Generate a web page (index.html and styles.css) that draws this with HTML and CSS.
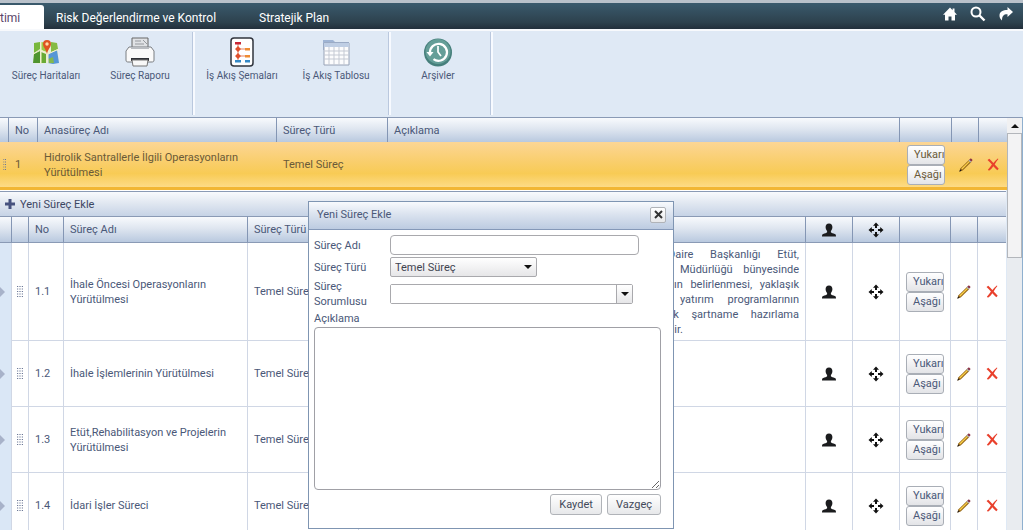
FILE: index.html
```html
<!DOCTYPE html>
<html lang="tr">
<head>
<meta charset="utf-8">
<title>Süreç Yönetimi</title>
<link rel="stylesheet" href="styles.css">
</head>
<body>
<svg class="defs" aria-hidden="true">
  <symbol id="i-person" viewBox="0 0 16 14"><path d="M8 0.5c2.300 0 3.400 1.500 3.400 3.600 0 1.700-.7 3.100-1.500 3.900v1.300c.6.9 2.300 1.100 3.900 1.700.9.400 1.200 1 1.200 2.500H1c0-1.500.3-2.100 1.200-2.500 1.600-.6 3.300-.8 3.900-1.700V8C5.300 7.200 4.600 5.800 4.600 4.100 4.600 2 5.700.5 8 .5z" fill="#1b1c1e"/></symbol>
  <symbol id="i-move" viewBox="0 0 16 16"><path d="M8 .5l3 3.300H9V6H7V3.800H5zM8 15.500l-3-3.300h2V10h2v2.200h2zM.5 8l3.300-3v2H6v2H3.800v2zM15.500 8l-3.300 3V9H10V7h2.200V5z" fill="#111"/></symbol>
  <symbol id="i-pencil" viewBox="0 0 14 14"><path d="M.5 13.500l1-3.200L10.200 1.800l2.200 2.200L3.700 12.500z" fill="#9a6a1c"/><path d="M2.300 10.500L10.300 2.700l.8.8L3.200 11.500z" fill="#ffd64a"/><path d="M9.800 2.200l1.600-1.600c.8-.5 2.400 1 2 1.900l-1.700 1.600z" fill="#8c3648"/><path d="M9.500 2.500l.8-.7 2 2-.8.800z" fill="#a6b4bc"/><path d="M.3 13.700l.8-2.400 1.500 1.500z" fill="#221b16"/></symbol>
  <symbol id="i-delete" viewBox="0 0 12 13"><path d="M.5 2.100L2.300.7C4 2.200 5.200 3.700 6.400 5 7.600 3.500 9 1.800 10.800.5l.6.600C9.800 3 8.600 4.800 7.700 6.400c1.300 1.400 2.600 2.800 4 4.300l-1.400 1.600C8.800 10.900 7.500 9.500 6.300 8.200 5.200 9.900 3.900 11.400 2 12.700L.9 11.700C2.500 10.100 3.900 8.200 4.900 6.600 3.600 5.100 2.200 3.600.5 2.100z" fill="#e9402c"/></symbol>
  <symbol id="i-grip" viewBox="0 0 6 12"><path d="M0 .5h6M0 3h6M0 5.500h6M0 8h6M0 10.500h6" stroke="#6c7897" stroke-width="1.200" stroke-dasharray="1.200 1.200"/></symbol>
</svg>

<header class="top">
  <nav class="tabs">
    <a class="tab active" href="#surec">timi</a>
    <a class="tab" href="#risk">Risk Değerlendirme ve Kontrol</a>
    <a class="tab" href="#plan">Stratejik Plan</a>
  </nav>
  <div class="tools">
    <button type="button" aria-label="Ana sayfa"><svg width="14" height="14" viewBox="0 0 14 14"><path d="M7 .5l2.600 2.700V1.500h1.900v3.600L14 7.700h-2V13.500H8.500V9.500h-3v4H2V7.700H0z" fill="#fff"/></svg></button>
    <button type="button" aria-label="Ara"><svg width="16" height="16" viewBox="0 0 16 16" fill="none" stroke="#fff"><circle cx="6" cy="6" r="4.500" stroke-width="2"/><path d="M9.500 9.500l5 5" stroke-width="2.400"/></svg></button>
    <button type="button" aria-label="Paylaş"><svg width="14" height="14" viewBox="0 0 14 14"><path d="M8.500 0L14 5 8.500 10V7.200C5 7 3 8.500 3 13.500 1.200 12 .3 10 .5 8c.4-3.200 3.300-5 8-5z" fill="#fff"/></svg></button>
  </div>
</header>

<section class="ribbon">
  <div class="group">
    <button type="button" class="action">
      <svg width="30" height="30" viewBox="0 0 30 30"><path d="M3 6l7-1 6 1 5-1 5 1 2 20-7 1-6-1-6 1-7-1z" fill="#e9eed4"/><path d="M3 6l6-1v7l-6 4z" fill="#78b83c"/><path d="M3 17l6-4v13l-7 0z" fill="#4f942e"/><path d="M10 5l6 1v9l-6-2z" fill="#9bcc48"/><path d="M10 15l5 2v9l-5 0z" fill="#69aa35"/><path d="M17 17l9-4 2 13-6 1-5-1z" fill="#5697d6"/><path d="M20 5l6 1 1 6-7 3z" fill="#86bb42"/><path d="M17 22l5-2 1 6-5 0z" fill="#84b84e"/><path d="M2 17l8-4 7 4 11-5M10 5v21M17 6v20" stroke="#f5f2cb" fill="none"/><path d="M16 17c-1-5-4-7-4-10a4 4 0 0 1 8 0c0 3-3 5-4 10z" fill="#df5420"/><circle cx="16" cy="7" r="1.700" fill="#ffd9a5"/></svg>
      <span>Süreç Haritaları</span>
    </button>
    <button type="button" class="action">
      <svg width="30" height="30" viewBox="0 0 30 30"><path d="M7 1h16v11H7z" fill="#e0e2e5" stroke="#666"/><path d="M10 4h6M10 7h9M18 3l4 4" stroke="#96999e"/><path d="M4 10h22l3 4v9c0 2-1 2-3 2H4c-2 0-3 0-3-2v-9z" fill="#fafafa" stroke="#7b7e82"/><path d="M6 10h18v2H6z" fill="#b9bcc1"/><path d="M6 21h18v3H6z" fill="#2e3136"/><path d="M7 23h16l-1 6H8z" fill="#f8f8f8" stroke="#777"/></svg>
      <span>Süreç Raporu</span>
    </button>
  </div>
  <div class="group">
    <button type="button" class="action">
      <svg width="30" height="30" viewBox="0 0 30 30"><rect x="4" y="1" width="22" height="28" rx="3" fill="#fff" stroke="#30343d" stroke-width="1.500"/><path d="M11 6v18M11 12h9M11 19h9" stroke="#e58460" fill="none"/><path d="M8 5h6v2.500H8z" fill="#c92736"/><path d="M11 9l3 3-3 3-3-3zM11 16l3 3-3 3-3-3z" fill="#e0502c"/><path d="M18 11h5v2.500h-5zM18 18h5v2.500h-5z" fill="#ef8c31"/><path d="M8 23h6v2.500H8zM18 23h5v2.500h-5z" fill="#3589c6"/></svg>
      <span>İş Akış Şemaları</span>
    </button>
    <button type="button" class="action">
      <svg width="30" height="30" viewBox="0 0 30 30"><path d="M2 3h10l2 2h14v8H2z" fill="#9fb4d4"/><path d="M3 6h25v22H3z" fill="#fcfcfd" stroke="#97a2b6"/><path d="M3 6h25v4H3z" fill="#bfcee4"/><path d="M3 14h25M3 18h25M3 22h25M8 10v18M13 10v18M18 10v18M23 10v18" stroke="#c4c9d3"/></svg>
      <span>İş Akış Tablosu</span>
    </button>
  </div>
  <div class="group">
    <button type="button" class="action">
      <svg width="30" height="30" viewBox="0 0 30 30"><circle cx="15" cy="15.500" r="14" fill="#467f7b"/><circle cx="15" cy="14.500" r="12.500" fill="#659e98"/><path d="M7 16a8.500 8.500 0 1 1 3.500 6.200" fill="none" stroke="#fff" stroke-width="2.200"/><path d="M3.500 15h7L7 19.500z" fill="#fff"/><path d="M15 9v6l3 4" fill="none" stroke="#fff" stroke-width="1.700"/></svg>
      <span>Arşivler</span>
    </button>
  </div>
</section>

<main class="workspace">
  <div class="content">
    <table class="grid outer">
      <colgroup><col class="c-edge"><col class="c-num"><col class="c-main"><col class="c-type"><col><col class="c-order"><col class="c-icon"><col class="c-last"></colgroup>
      <thead><tr><th></th><th>No</th><th>Anasüreç Adı</th><th>Süreç Türü</th><th>Açıklama</th><th></th><th></th><th></th></tr></thead>
      <tbody><tr class="selected">
        <td class="ic"><svg width="3" height="12" viewBox="3 0 3 12"><use href="#i-grip" width="6" height="12"/></svg></td><td>1</td><td>Hidrolik Santrallerle İlgili Operasyonların Yürütülmesi</td><td>Temel Süreç</td><td></td>
        <td><div class="order"><button type="button">Yukarı</button><button type="button">Aşağı</button></div></td>
        <td class="ic"><svg width="14" height="14"><use href="#i-pencil"/></svg></td><td class="ic"><svg width="12" height="13"><use href="#i-delete"/></svg></td>
      </tr></tbody>
    </table>
    <div class="nested">
      <div class="addbar"><button type="button"><svg width="10" height="10" viewBox="0 0 10 10"><path d="M3.500 0h3v3.500H10v3H6.500V10h-3V6.500H0v-3h3.500z" fill="#47527f"/></svg>Yeni Süreç Ekle</button></div>
      <table class="grid inner">
        <colgroup><col class="n-arrow"><col class="n-grip"><col class="n-num"><col class="n-name"><col class="c-type"><col><col class="n-user"><col class="n-user"><col class="n-order"><col class="c-icon"><col class="c-last"></colgroup>
        <thead><tr><th></th><th></th><th>No</th><th>Süreç Adı</th><th>Süreç Türü</th><th></th><th class="ic"><svg width="16" height="14"><use href="#i-person"/></svg></th><th class="ic"><svg width="16" height="16"><use href="#i-move"/></svg></th><th></th><th></th><th></th></tr></thead>
        <tbody>
          <tr class="tall"><td class="arrow"><i></i></td><td class="ic"><svg width="6" height="12"><use href="#i-grip"/></svg></td><td>1.1</td><td>İhale Öncesi Operasyonların Yürütülmesi</td><td>Temel Süreç</td>
            <td><p class="desc"><span>Daire Başkanlığı Etüt,</span><span class="in">Müdürlüğü bünyesinde</span><span>nın belirlenmesi, yaklaşık</span><span class="in">yatırım programlarının</span><span>lik şartname hazırlama</span><span class="end">dir.</span></p></td>
            <td class="ic"><svg width="16" height="14"><use href="#i-person"/></svg></td><td class="ic"><svg width="16" height="16"><use href="#i-move"/></svg></td><td><div class="order"><button type="button">Yukarı</button><button type="button">Aşağı</button></div></td><td class="ic"><svg width="14" height="14"><use href="#i-pencil"/></svg></td><td class="ic"><svg width="12" height="13"><use href="#i-delete"/></svg></td></tr>
          <tr><td class="arrow"><i></i></td><td class="ic"><svg width="6" height="12"><use href="#i-grip"/></svg></td><td>1.2</td><td>İhale İşlemlerinin Yürütülmesi</td><td>Temel Süreç</td><td></td>
            <td class="ic"><svg width="16" height="14"><use href="#i-person"/></svg></td><td class="ic"><svg width="16" height="16"><use href="#i-move"/></svg></td><td><div class="order"><button type="button">Yukarı</button><button type="button">Aşağı</button></div></td><td class="ic"><svg width="14" height="14"><use href="#i-pencil"/></svg></td><td class="ic"><svg width="12" height="13"><use href="#i-delete"/></svg></td></tr>
          <tr><td class="arrow"><i></i></td><td class="ic"><svg width="6" height="12"><use href="#i-grip"/></svg></td><td>1.3</td><td>Etüt,Rehabilitasyon ve Projelerin Yürütülmesi</td><td>Temel Süreç</td><td></td>
            <td class="ic"><svg width="16" height="14"><use href="#i-person"/></svg></td><td class="ic"><svg width="16" height="16"><use href="#i-move"/></svg></td><td><div class="order"><button type="button">Yukarı</button><button type="button">Aşağı</button></div></td><td class="ic"><svg width="14" height="14"><use href="#i-pencil"/></svg></td><td class="ic"><svg width="12" height="13"><use href="#i-delete"/></svg></td></tr>
          <tr><td class="arrow"><i></i></td><td class="ic"><svg width="6" height="12"><use href="#i-grip"/></svg></td><td>1.4</td><td>İdari İşler Süreci</td><td>Temel Süreç</td><td></td>
            <td class="ic"><svg width="16" height="14"><use href="#i-person"/></svg></td><td class="ic"><svg width="16" height="16"><use href="#i-move"/></svg></td><td><div class="order"><button type="button">Yukarı</button><button type="button">Aşağı</button></div></td><td class="ic"><svg width="14" height="14"><use href="#i-pencil"/></svg></td><td class="ic"><svg width="12" height="13"><use href="#i-delete"/></svg></td></tr>
        </tbody>
      </table>
    </div>
  </div>
  <div class="scroll"><button type="button" aria-label="Yukarı kaydır"><i class="up"></i></button><div class="thumb"></div></div>
</main>

<form class="dialog" role="dialog" aria-labelledby="dlg-title">
  <div class="dialog-head"><span id="dlg-title">Yeni Süreç Ekle</span><button type="button" class="btn close" aria-label="Kapat"><svg width="9" height="9" viewBox="0 0 9 9"><path d="M1 1l7 7M8 1L1 8" stroke="#333" stroke-width="2"/></svg></button></div>
  <div class="dialog-body">
    <div class="field"><label for="name">Süreç Adı</label><input id="name" class="text" type="text"></div>
    <div class="field"><label for="type">Süreç Türü</label><div class="select"><select id="type"><option>Temel Süreç</option></select><i class="down"></i></div></div>
    <div class="field owner"><label for="owner">Süreç Sorumlusu</label><div class="combo"><input id="owner" type="text"><button type="button" aria-label="Listeyi aç"><i class="down"></i></button></div></div>
    <label class="area-label" for="note">Açıklama</label>
    <textarea id="note"></textarea>
    <div class="buttons"><button type="button" class="btn">Kaydet</button><button type="button" class="btn">Vazgeç</button></div>
  </div>
</form>
</body>
</html>
```
FILE: styles.css
```css
* { box-sizing: border-box; }
html, body { height: 100%; }
body {
  margin: 0;
  display: flex;
  flex-direction: column;
  position: relative;
  overflow: hidden;
  background: #dfe9f5;
  color: #4a5878;
  font: 11px/15px Roboto, "Open Sans", sans-serif;
}
button, input, select, textarea { font: inherit; color: inherit; margin: 0; }
button { padding: 0; }
.defs { position: absolute; width: 0; height: 0; }

/* Top bar */
.top {
  flex: none;
  display: flex;
  justify-content: space-between;
  height: 31px;
  border-top: 3px solid #b9c1ca;
  border-bottom: 2px solid #f7f9fc;
  background: linear-gradient(#3a5a6d, #2d414d 75%, #222f3b);
}
.tabs { display: flex; align-items: flex-end; }
.tab { padding: 6px 0 0 12px; width: 203px; height: 24px; color: #fff; font-size: 12px; text-decoration: none; white-space: nowrap; }
.tab.active { width: 44px; padding-left: 0; background: #fff; color: #5a4569; border-radius: 0 3px 0 0; }
.tools { display: flex; align-items: center; gap: 13px; padding: 0 10px 5px 0; }
.tools button { display: flex; border: 0; background: none; }

/* Ribbon */
.ribbon { flex: none; display: flex; height: 86px; padding: 1px 0 2px; margin-left: -1px; }
.group { display: flex; padding-right: 6px; border-right: 2px solid #f7faff; box-shadow: inset -1px 0 #bac8de; }
.action { display: flex; flex-direction: column; align-items: center; gap: 1px; width: 94px; padding-top: 5px; border: 0; background: none; font-size: 10px; white-space: nowrap; }

/* Grids */
.workspace { flex: 1; display: flex; min-height: 0; overflow: hidden; border-right: 1px solid #8fb0cf; }
.content { flex: 1; min-width: 0; }
.grid { width: 100%; border-collapse: separate; border-spacing: 0; table-layout: fixed; }
.grid th, .grid td { padding: 0 6px; text-align: left; font-weight: 400; vertical-align: middle; border-right: 1px solid #d0d7e5; }
.grid th { height: 25px; background: linear-gradient(#f8fafd, #dfe6f0 45%, #b9c9df); border-right-color: #8496b4; border-top: 1px solid #8a9ab5; }
.grid th:last-child, .grid td:last-child { border-right: 0; }
.grid .ic { padding: 0; text-align: center; }
.ic svg { display: block; margin: 0 auto; }
.c-edge { width: 9px; } .c-num { width: 29px; } .c-main { width: 239px; } .c-type { width: 111px; }
.c-order { width: 52px; } .c-icon { width: 27px; } .c-last { width: 28px; }
.n-arrow { width: 12px; } .n-grip { width: 17px; } .n-num { width: 35px; } .n-name { width: 184px; }
.n-user { width: 47px; } .n-order { width: 51px; }
.selected td { height: 48px; border-right: 0; border-bottom: 3px solid #f2b634; background: linear-gradient(#fcd695, #f9ce6b 45%, #f8cb55 70%, #fddb86); color: #6a5a38; }
.selected .order { margin-left: 1px; }
.order { display: flex; flex-direction: column; width: 38px; }
.order button { height: 20px; padding-left: 6px; overflow: hidden; text-align: left; white-space: nowrap; border: 1px solid #a9aeb6; border-radius: 3px; background: linear-gradient(#fff, #e3e4e7); }
.nested { margin-right: 1px; border-top: 1px solid #fff; }
.addbar { display: flex; height: 25px; padding-left: 5px; border-top: 1px solid #8a9ab5; background: linear-gradient(#f8fafd, #dfe6f0 50%, #c6d3e6); }
.addbar button { display: flex; align-items: center; gap: 5px; border: 0; background: none; color: #3c4663; }
.inner th { height: 27px; border-bottom: 1px solid #8a9ab5; }
.inner td { height: 66px; border-bottom: 1px solid #d0d7e5; background: #fff; }
.inner .tall td { height: 98px; }
.inner .arrow { padding: 0; background: #dae7f6; border-bottom: 0; }
.arrow i { display: block; width: 0; border: 5px solid transparent; border-left-color: #a7b2c9; border-right: 0; }
.desc { width: 131px; margin: 0 0 0 auto; }
.desc span { display: block; text-align-last: justify; white-space: nowrap; }
.desc .in { padding-left: 12px; }
.desc .end { text-align-last: left; }

/* Scroll bar */
.scroll { flex: none; width: 15px; display: flex; flex-direction: column; background: #e9ecf0; border-top: 1px solid #8a9ab5; }
.scroll button { height: 16px; border: 0; border-bottom: 1px solid #b3b6bb; background: #f1f1f2; display: flex; align-items: center; justify-content: center; }
.thumb { height: 124px; background: #f3f3f4; border: 1px solid #b3b6bb; border-top: 0; }
.up { border: 4px solid transparent; border-top: 0; border-bottom-color: #111; }
.down { border: 4px solid transparent; border-bottom: 0; border-top-color: #111; }

/* Dialog */
.dialog { position: absolute; left: 308px; top: 201px; width: 366px; background: #fff; border: 1px solid #7f95b2; }
.dialog-head { display: flex; align-items: center; justify-content: space-between; height: 28px; padding: 0 7px 2px 8px; border-bottom: 1px solid #8498b8; background: linear-gradient(#f8fafd, #dbe3ef 45%, #bccbe1); }
.btn { height: 21px; padding: 0 8px; border: 1px solid #b0b3b8; border-radius: 3px; background: linear-gradient(#fff, #e7e8ea); color: #43495a; }
.close { display: flex; align-items: center; justify-content: center; width: 16px; height: 16px; padding: 0; border-radius: 2px; }
.dialog-body { display: flex; flex-direction: column; padding: 4px 12px 13px 5px; }
.field { display: flex; align-items: center; height: 22px; }
.field label { width: 76px; padding-right: 16px; white-space: nowrap; }
.owner { height: 31px; }
.owner label { white-space: normal; }
.text { width: 249px; height: 20px; border: 1px solid #a9a9ad; border-radius: 4px; background: #fff; }
.select { position: relative; width: 147px; height: 20px; }
.select select { appearance: none; width: 100%; height: 100%; padding: 0 4px; border: 1px solid #a9a9ad; border-radius: 2px; background: linear-gradient(#fff, #e6e6e8); color: #3f4450; }
.select .down { position: absolute; right: 5px; top: 8px; pointer-events: none; }
.combo { display: flex; width: 243px; height: 20px; border: 1px solid #a9a9ad; border-radius: 2px; }
.combo input { flex: 1; min-width: 0; border: 0; background: #fff; }
.combo button { display: flex; align-items: center; justify-content: center; width: 16px; border: 0; border-left: 1px solid #a9a9ad; background: linear-gradient(#fff, #e6e6e8); }
.area-label { padding: 2px 0 1px; }
textarea { width: 100%; height: 163px; border: 1px solid #a0a0a6; border-radius: 4px; background: #fff; resize: both; }
.buttons { display: flex; justify-content: flex-end; gap: 5px; padding-top: 4px; }
.buttons .btn { min-width: 52px; }
```
